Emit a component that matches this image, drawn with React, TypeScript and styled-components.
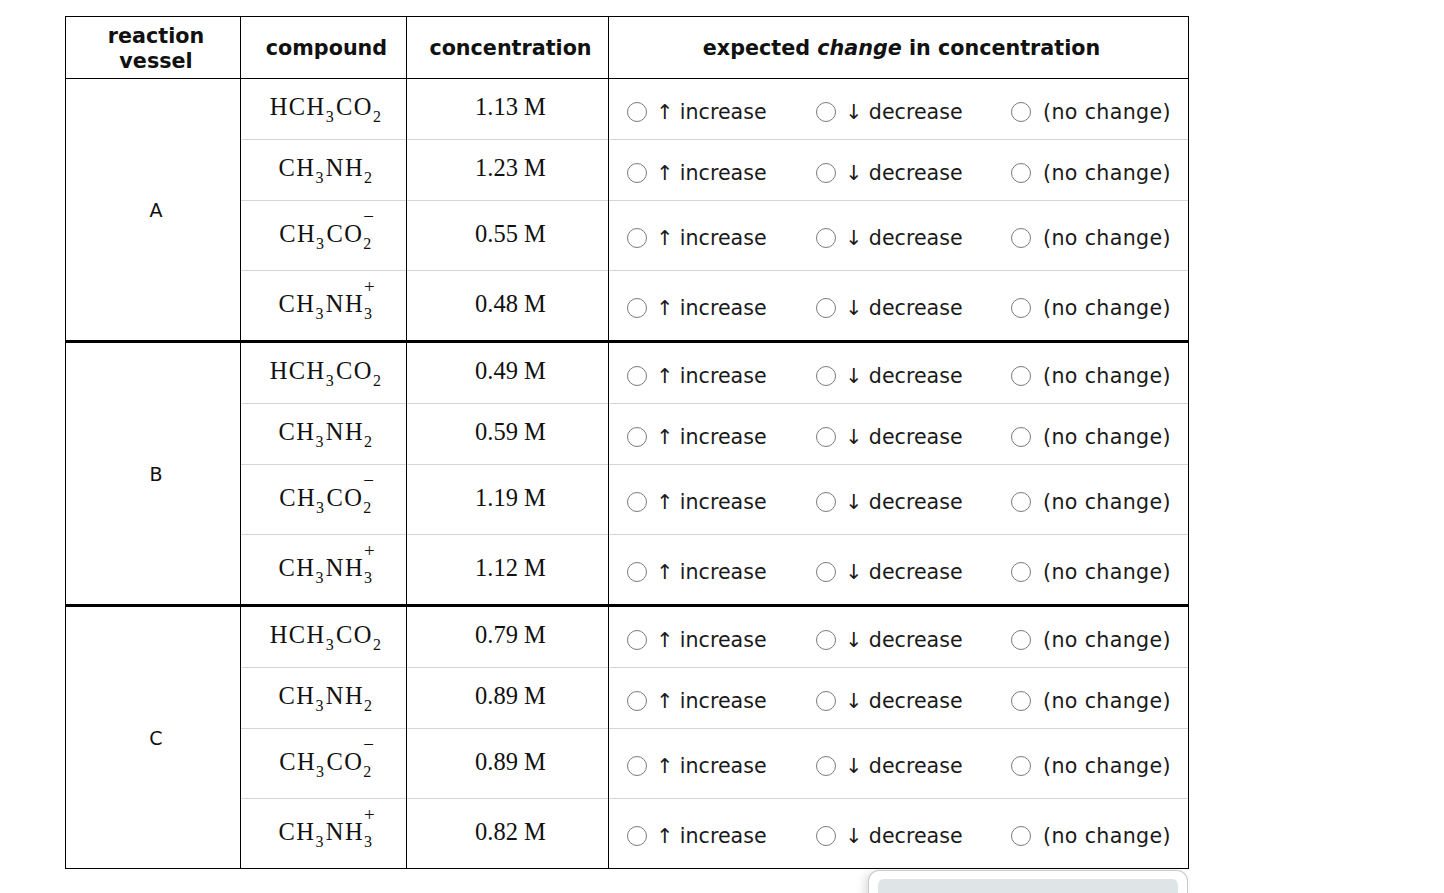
import React from "react";
import styled, { createGlobalStyle } from "styled-components";

const GlobalStyle = createGlobalStyle`
  html, body { margin: 0; padding: 0; background: #fff; }
  body { font-family: "DejaVu Sans", Verdana, sans-serif; color: #111; }
`;

const Page = styled.div`
  display: flex;
  flex-direction: column;
  width: 1123px;
  padding: 16px 0 0 65px;
`;

const Table = styled.table`
  border-collapse: collapse;
  table-layout: fixed;
  width: 1123px;
  border: 1px solid #000;
`;

const HeadCell = styled.th`
  height: 59px;
  padding: 2px 0 0 6px;
  border: 1px solid #000;
  font-family: "DejaVu Sans", Verdana, sans-serif;
  font-weight: bold;
  font-size: 20.7px;
  line-height: 25px;
  text-align: center;
  vertical-align: middle;
  color: #111;
`;

const Row = styled.tr<{ $h: number }>`
  height: ${(p) => p.$h}px;
`;

const Cell = styled.td<{ $groupStart: boolean; $thick: boolean }>`
  padding: 0 0 0 6px;
  border-left: 1px solid #000;
  border-right: 1px solid #000;
  border-top: ${(p) =>
    p.$thick ? "3px solid #000" : p.$groupStart ? "1px solid #000" : "1px solid #d4d4d4"};
  text-align: center;
  vertical-align: middle;
`;

const VesselCell = styled(Cell)`
  font-family: "DejaVu Sans", Verdana, sans-serif;
  font-size: 19px;
  color: #111;
`;

const SerifCell = styled(Cell)`
  font-family: "Liberation Serif", "Times New Roman", serif;
  font-size: 24.5px;
  color: #111;
  padding-bottom: 4px;
`;

const ChangeCell = styled(Cell)`
  text-align: left;
  padding: 5px 0 0 0;
`;

const Options = styled.div`
  display: grid;
  grid-template-columns: 189px 195px auto;
  align-items: center;
  padding-left: 18px;
`;

const Option = styled.label<{ $wide?: boolean }>`
  display: inline-flex;
  align-items: center;
  gap: 12px;
  font-family: "DejaVu Sans", Verdana, sans-serif;
  font-size: 20.6px;
  letter-spacing: ${(p) => (p.$wide ? "0.35px" : "0")};
  color: #1a1a1a;
  white-space: nowrap;
  cursor: pointer;
`;

const Arrow = styled.span`
  margin-left: -3px;
`;

const Radio = styled.input`
  appearance: none;
  -webkit-appearance: none;
  margin: 0;
  width: 20px;
  height: 20px;
  border: 1.5px solid #7b7b7b;
  border-radius: 50%;
  background: #fff;
  flex: none;
`;

const Formula = styled.span`
  display: inline-flex;
  align-items: baseline;
  white-space: nowrap;
  line-height: 1;
  letter-spacing: 1.4px;
`;

const Sub = styled.span`
  font-size: 16px;
  position: relative;
  top: 7px;
  margin-right: 1px;
`;

const ScriptBox = styled.span`
  position: relative;
  font-size: 16px;
  top: 7px;
  margin-right: 1px;
`;

const Charge = styled.span`
  position: absolute;
  left: 0;
  top: -29px;
  font-size: 19px;
  line-height: 19px;
`;

const Footer = styled.div`
  align-self: flex-end;
  width: 320px;
  height: 40px;
  box-sizing: border-box;
  margin-top: 1px;
  padding: 8px 9px 0;
  border: 1px solid #c9c9c9;
  border-bottom: none;
  border-radius: 11px 11px 0 0;
  box-shadow: -4px 2px 8px rgba(0, 0, 0, 0.12);
  background: #fff;
`;

const FooterBar = styled.div`
  height: 40px;
  border-radius: 6px 6px 0 0;
  background: #dfe5e7;
`;

type Part = { t: string; sub?: string; sup?: string };

const compounds: { parts: Part[] }[] = [
  { parts: [{ t: "HCH", sub: "3" }, { t: "CO", sub: "2" }] },
  { parts: [{ t: "CH", sub: "3" }, { t: "NH", sub: "2" }] },
  { parts: [{ t: "CH", sub: "3" }, { t: "CO", sub: "2", sup: "−" }] },
  { parts: [{ t: "CH", sub: "3" }, { t: "NH", sub: "3", sup: "+" }] },
];

const groups = [
  { name: "A", conc: ["1.13 M", "1.23 M", "0.55 M", "0.48 M"] },
  { name: "B", conc: ["0.49 M", "0.59 M", "1.19 M", "1.12 M"] },
  { name: "C", conc: ["0.79 M", "0.89 M", "0.89 M", "0.82 M"] },
];

function renderFormula(parts: Part[]) {
  return (
    <Formula>
      {parts.map((p, i) => (
        <React.Fragment key={i}>
          <span>{p.t}</span>
          {p.sup ? (
            <ScriptBox>
              <Charge>{p.sup}</Charge>
              {p.sub}
            </ScriptBox>
          ) : (
            <Sub>{p.sub}</Sub>
          )}
        </React.Fragment>
      ))}
    </Formula>
  );
}

function rowHeight(gi: number, ci: number) {
  const base = [61, 61, 70, gi === 2 ? 70 : 71][ci];
  return gi > 0 && ci === 0 ? base + 1 : base;
}

export default function App() {
  return (
    <>
      <GlobalStyle />
      <Page>
        <Table>
          <colgroup>
            <col style={{ width: 175 }} />
            <col style={{ width: 166 }} />
            <col style={{ width: 202 }} />
            <col style={{ width: 580 }} />
          </colgroup>
          <thead>
            <tr>
              <HeadCell>
                reaction
                <br />
                vessel
              </HeadCell>
              <HeadCell>compound</HeadCell>
              <HeadCell>concentration</HeadCell>
              <HeadCell>
                expected <i>change</i> in concentration
              </HeadCell>
            </tr>
          </thead>
          <tbody>
            {groups.map((g, gi) =>
              compounds.map((c, ci) => {
                const groupStart = ci === 0;
                const thick = groupStart && gi > 0;
                const name = `r-${g.name}-${ci}`;
                return (
                  <Row key={name} $h={rowHeight(gi, ci)}>
                    {groupStart && (
                      <VesselCell rowSpan={4} $groupStart={groupStart} $thick={thick}>
                        {g.name}
                      </VesselCell>
                    )}
                    <SerifCell $groupStart={groupStart} $thick={thick}>
                      {renderFormula(c.parts)}
                    </SerifCell>
                    <SerifCell $groupStart={groupStart} $thick={thick}>
                      {g.conc[ci]}
                    </SerifCell>
                    <ChangeCell $groupStart={groupStart} $thick={thick}>
                      <Options>
                        <Option>
                          <Radio type="radio" name={name} />
                          <span>
                            <Arrow>↑</Arrow> increase
                          </span>
                        </Option>
                        <Option>
                          <Radio type="radio" name={name} />
                          <span>
                            <Arrow>↓</Arrow> decrease
                          </span>
                        </Option>
                        <Option $wide>
                          <Radio type="radio" name={name} />
                          (no change)
                        </Option>
                      </Options>
                    </ChangeCell>
                  </Row>
                );
              })
            )}
          </tbody>
        </Table>
        <Footer>
          <FooterBar />
        </Footer>
      </Page>
    </>
  );
}
